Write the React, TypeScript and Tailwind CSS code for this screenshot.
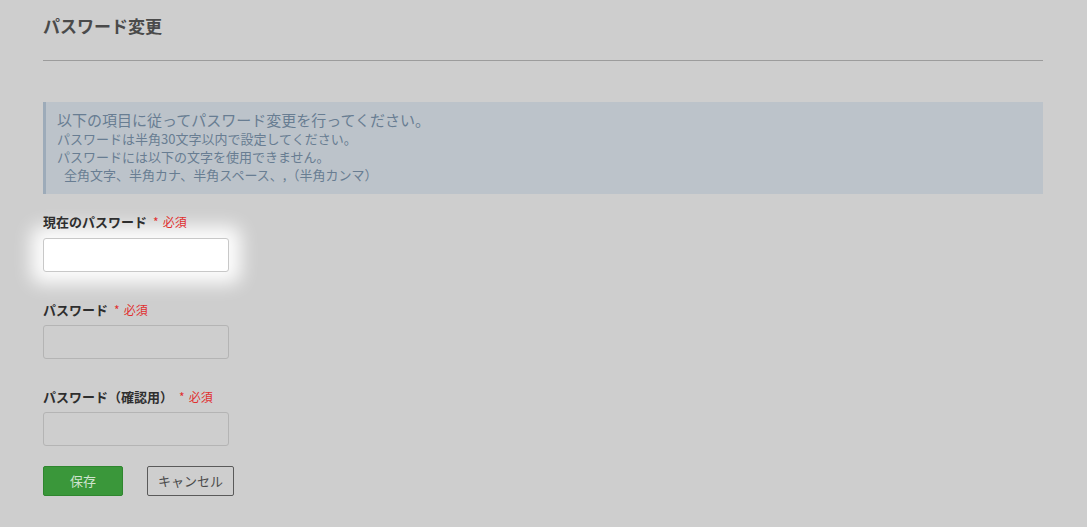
import React from "react";

const font = { fontFamily: '"Noto Sans CJK JP", "Noto Sans", sans-serif' };

function Label({ text }: { text: string }) {
  return (
    <div className="flex items-baseline h-[18px] leading-[18px]">
      <span className="text-[13px] font-bold text-[#2e2e2e]">{text}</span>
      <span className="ml-[6px] text-[12px] text-[#e0302f]">*</span>
      <span className="ml-[4px] text-[12px] text-[#e0302f]">必須</span>
    </div>
  );
}

export default function App() {
  return (
    <div style={font} className="min-h-[527px] w-full bg-[#cecece] pl-[43px] pt-[14px]">
      <div className="w-[1000px]">
        <h1 className="text-[17px] font-bold leading-[24px] text-[#4a4a4a]">パスワード変更</h1>
        <div className="mt-[22px] h-px bg-[#9c9c9c]" />
        <div className="mt-[41px] h-[92px] border-l-[3px] border-[#9dabb9] bg-[#bcc3ca] pl-[11px] pt-[8px] text-[#687d92]">
          <div className="text-[15px] leading-[20px]">以下の項目に従ってパスワード変更を行ってください。</div>
          <div className="text-[13px] leading-[18px]">パスワードは半角30文字以内で設定してください。</div>
          <div className="text-[13px] leading-[18px]">パスワードには以下の文字を使用できません。</div>
          <div className="pl-[7px] text-[13px] leading-[18px]">全角文字、半角カナ、半角スペース、,（半角カンマ）</div>
        </div>

        <div className="mt-[19px]">
          <Label text="現在のパスワード" />
          <input
            className="mt-[7px] block h-[34px] w-[186px] rounded-[3px] border border-[#c8c8c8] bg-white shadow-[0_0_18px_12px_rgba(255,255,255,0.95)] outline-none"
            type="password"
          />
        </div>

        <div className="mt-[29px]">
          <Label text="パスワード" />
          <input
            className="mt-[6px] block h-[34px] w-[186px] rounded-[3px] border border-[#b4b4b4] bg-transparent outline-none"
            type="password"
          />
        </div>

        <div className="mt-[29px]">
          <Label text="パスワード（確認用）" />
          <input
            className="mt-[6px] block h-[34px] w-[186px] rounded-[3px] border border-[#b4b4b4] bg-transparent outline-none"
            type="password"
          />
        </div>

        <div className="mt-[20px] flex gap-[24px]">
          <button className="h-[30px] w-[80px] rounded-[2px] border border-[#2f862f] bg-[#3a973a] text-[13px] text-[#cfe3cf]">
            保存
          </button>
          <button className="h-[30px] w-[87px] rounded-[2px] border border-[#5a5a5a] bg-transparent text-[13px] text-[#4a4a4a]">
            キャンセル
          </button>
        </div>
      </div>
    </div>
  );
}
